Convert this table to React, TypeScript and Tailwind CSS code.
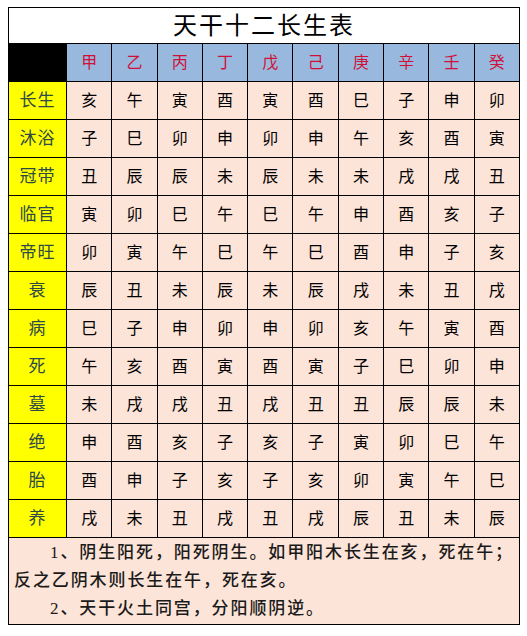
const stems = ['甲', '乙', '丙', '丁', '戊', '己', '庚', '辛', '壬', '癸']

const rows: [string, string[]][] = [
  ['长生', ['亥', '午', '寅', '酉', '寅', '酉', '巳', '子', '申', '卯']],
  ['沐浴', ['子', '巳', '卯', '申', '卯', '申', '午', '亥', '酉', '寅']],
  ['冠带', ['丑', '辰', '辰', '未', '辰', '未', '未', '戌', '戌', '丑']],
  ['临官', ['寅', '卯', '巳', '午', '巳', '午', '申', '酉', '亥', '子']],
  ['帝旺', ['卯', '寅', '午', '巳', '午', '巳', '酉', '申', '子', '亥']],
  ['衰', ['辰', '丑', '未', '辰', '未', '辰', '戌', '未', '丑', '戌']],
  ['病', ['巳', '子', '申', '卯', '申', '卯', '亥', '午', '寅', '酉']],
  ['死', ['午', '亥', '酉', '寅', '酉', '寅', '子', '巳', '卯', '申']],
  ['墓', ['未', '戌', '戌', '丑', '戌', '丑', '丑', '辰', '辰', '未']],
  ['绝', ['申', '酉', '亥', '子', '亥', '子', '寅', '卯', '巳', '午']],
  ['胎', ['酉', '申', '子', '亥', '子', '亥', '卯', '寅', '午', '巳']],
  ['养', ['戌', '未', '丑', '戌', '丑', '戌', '辰', '丑', '未', '辰']],
]

export default function App() {
  return (
    <div
      className="min-h-[636px] bg-white pl-[8px] pt-[7px]"
      style={{ fontFamily: '"Liberation Serif", "Noto Sans CJK SC", serif' }}
    >
      <div className="w-[512px] border border-black">
        {/* Title */}
        <div className="flex h-[36px] items-center justify-center border-b border-black bg-white text-[24px] tracking-[2px] text-black">
          天干十二长生表
        </div>

        {/* Table */}
        <div className="grid grid-cols-[57px_repeat(10,1fr)] gap-px bg-black">
          <div className="h-[37px] bg-black" />
          {stems.map((s) => (
            <div
              key={s}
              className="flex h-[37px] items-center justify-center bg-[#98b9dd] text-[16px] text-[#d0103a]"
            >
              {s}
            </div>
          ))}
          {rows.map(([label, cells]) => (
            <>
              <div
                key={label}
                className="flex h-[37px] items-center justify-center bg-[#ffff00] text-[17px] tracking-[1px] text-[#2e4a45]"
              >
                {label}
              </div>
              {cells.map((c, i) => (
                <div
                  key={label + i}
                  className="flex h-[37px] items-center justify-center bg-[#fde4d8] text-[16px] text-black"
                >
                  {c}
                </div>
              ))}
            </>
          ))}
        </div>

        {/* Notes */}
        <div className="border-t border-black bg-[#fde4d8] px-[5px] pb-[1px] pt-[1px] text-[17px] font-medium leading-[28px] tracking-[1.9px] text-[#1a1a1a]">
          <p className="indent-[36px]">1、阴生阳死，阳死阴生。如甲阳木长生在亥，死在午；反之乙阴木则长生在午，死在亥。</p>
          <p className="indent-[36px]">2、天干火土同宫，分阳顺阴逆。</p>
        </div>
      </div>
    </div>
  )
}
